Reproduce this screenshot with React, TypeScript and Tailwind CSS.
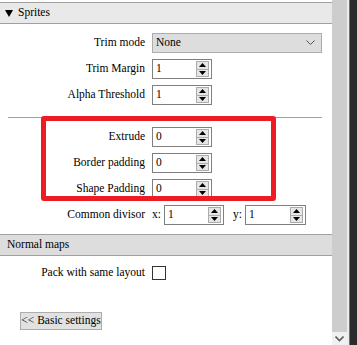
import React from "react";

const SpinArrows = () => (
  <div className="flex flex-col w-[13px] h-[16px]">
    <div className="flex-1 flex items-center justify-center bg-[#e6e6e6] border border-[#acacac]">
      <svg width="7" height="4" viewBox="0 0 7 4">
        <path d="M3.5 0 L7 4 L0 4 Z" fill="#000" />
      </svg>
    </div>
    <div className="flex-1 flex items-center justify-center bg-[#e6e6e6] border border-t-0 border-[#acacac]">
      <svg width="7" height="4" viewBox="0 0 7 4">
        <path d="M0 0 L7 0 L3.5 4 Z" fill="#000" />
      </svg>
    </div>
  </div>
);

type SpinProps = { value: string; width?: string };

const SpinBox = ({ value, width = "w-[60px]" }: SpinProps) => (
  <div
    className={`${width} h-[20px] flex items-center justify-between border border-[#7f7f7f] bg-white pl-[3px] pr-[2px]`}
  >
    <span className="leading-none">{value}</span>
    <SpinArrows />
  </div>
);

type RowProps = { label: string; children: React.ReactNode };

const Row = ({ label, children }: RowProps) => (
  <div className="flex items-center h-[20px]">
    <div className="w-[146px] text-right pr-[1px] whitespace-nowrap">{label}</div>
    <div className="ml-[6px] flex items-center">{children}</div>
  </div>
);

export default function App() {
  return (
    <div className="flex w-[357px] h-[345px] overflow-hidden bg-white [font-family:'Liberation_Serif',serif] text-[11.5px] text-black">
      {/* settings panel */}
      <div className="relative w-[332px] h-full flex flex-col">
        <div className="mt-[2px] h-[22px] flex items-center gap-[5px] pl-[5px] bg-[#e9e9e9] border-y border-[#a0a0a0]">
          <svg width="8" height="7" viewBox="0 0 8 7">
            <path d="M0 0 L8 0 L4 7 Z" fill="#000" />
          </svg>
          <span>Sprites</span>
        </div>

        <div className="mt-[9px] flex flex-col gap-[6px]">
          <Row label="Trim mode">
            <div className="w-[170px] h-[20px] flex items-center justify-between bg-[#dddddd] border border-[#adadad] pl-[3px] pr-[6px]">
              <span>None</span>
              <svg width="9" height="6" viewBox="0 0 9 6">
                <path d="M0.5 0.5 L4.5 4.5 L8.5 0.5" stroke="#555" strokeWidth="1" fill="none" />
              </svg>
            </div>
          </Row>
          <Row label="Trim Margin">
            <SpinBox value="1" />
          </Row>
          <Row label="Alpha Threshold">
            <SpinBox value="1" />
          </Row>
        </div>

        <div className="mt-[12px] ml-[8px] w-[314px] h-px bg-[#a0a0a0]" />

        <div className="mt-[9px] flex flex-col gap-[6px]">
          <Row label="Extrude">
            <SpinBox value="0" />
          </Row>
          <Row label="Border padding">
            <SpinBox value="0" />
          </Row>
          <Row label="Shape Padding">
            <SpinBox value="0" />
          </Row>
          <div className="flex items-center h-[20px]">
            <div className="w-[146px] text-right pr-[1px] whitespace-nowrap">Common divisor</div>
            <span className="ml-[6px]">x:</span>
            <div className="ml-[3px]">
              <SpinBox value="1" width="w-[60px]" />
            </div>
            <span className="ml-[9px]">y:</span>
            <div className="ml-[3px]">
              <SpinBox value="1" width="w-[61px]" />
            </div>
          </div>
        </div>

        <div className="mt-[9px] h-[22px] flex items-center pl-[7px] bg-[#dddddd] border-y border-[#a0a0a0]">
          Normal maps
        </div>

        <div className="mt-[10px] flex items-center h-[14px]">
          <div className="w-[146px] text-right pr-[1px] whitespace-nowrap">Pack with same layout</div>
          <div className="ml-[6px] w-[14px] h-[14px] border border-[#333] bg-white" />
        </div>

        <div className="mt-[32px] ml-[20px] w-[82px] h-[18px] flex items-center justify-center whitespace-nowrap bg-[#e1e1e1] border border-[#adadad]">
          &lt;&lt; Basic settings
        </div>

        {/* annotation */}
        <div className="absolute left-[41px] top-[116px] w-[235px] h-[85px] border-[5px] border-[#ed1c24] rounded-[3px]" />
      </div>

      {/* scrollbar */}
      <div className="w-[15px] h-full flex flex-col bg-[#cdcdcd]">
        <div className="flex-1" />
        <div className="h-[13px] flex items-center justify-center bg-[#f0f0f0]">
          <svg width="9" height="6" viewBox="0 0 9 6">
            <path d="M0.5 0.5 L4.5 4.5 L8.5 0.5" stroke="#606060" strokeWidth="1.6" fill="none" />
          </svg>
        </div>
      </div>
      <div className="w-[2px] h-full bg-[#ececec]" />
      <div className="w-px h-full bg-[#2f80d0]" />
      <div className="flex-1 h-full bg-[#2b2b2b]" />
    </div>
  );
}
